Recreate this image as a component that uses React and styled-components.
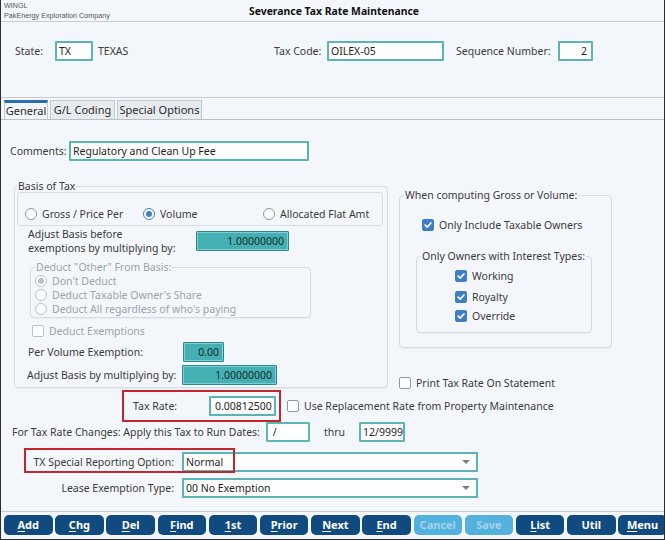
import React from 'react';
import styled, { createGlobalStyle, css } from 'styled-components';

const GlobalStyle = createGlobalStyle`
  html, body { margin: 0; padding: 0; background: #f3f7fb; }
  * { box-sizing: border-box; }
`;

const Frame = styled.div`
  width: 665px;
  height: 540px;
  background: #f3f7fb;
  border-left: 1px solid #2e2e2e;
  border-right: 1px solid #2e2e2e;
  border-bottom: 1px solid #2e2e2e;
  font-family: 'Noto Sans', sans-serif;
  font-size: 10.5px;
  color: #3a3a3a;
  display: flex;
  flex-direction: column;
  overflow: hidden;
`;

const Header = styled.div`
  height: 22px;
  border-bottom: 1px solid #c9cdd3;
  display: grid;
  grid-template-columns: 1fr auto 1fr;
  align-items: center;
`;

const Company = styled.div`
  font-family: 'Liberation Sans', sans-serif;
  font-size: 7.2px;
  line-height: 9.5px;
  color: #555;
  padding-left: 3px;
`;

const Title = styled.div`
  font-weight: 700;
  font-size: 10.4px;
  color: #111;
  padding-left: 3px;
`;

const TopRow = styled.div`
  height: 75px;
  display: flex;
  align-items: flex-start;
  padding: 19px 0 0 14px;
`;

const Label = styled.div`
  width: ${(p) => (p.$w ? `${p.$w}px` : 'auto')};
  margin-left: ${(p) => p.$ml || 0}px;
  text-align: ${(p) => (p.$right ? 'right' : 'left')};
  color: ${(p) => (p.$disabled ? '#9ca3aa' : '#3a3a3a')};
  line-height: ${(p) => p.$lh || 20}px;
  white-space: nowrap;
  flex-shrink: 0;
`;

const Input = styled.div`
  width: ${(p) => p.$w}px;
  height: 20px;
  margin-left: ${(p) => p.$ml || 0}px;
  flex-shrink: 0;
  border: 2px solid #5bb4b5;
  border-radius: 1px;
  background: #fff;
  color: #1e1e1e;
  padding: 0 ${(p) => (p.$right ? 4 : 2)}px;
  line-height: 16px;
  text-align: ${(p) => (p.$right ? 'right' : 'left')};
  white-space: nowrap;
  overflow: hidden;
  ${(p) =>
    p.$filled &&
    css`
      background: #44b0b4;
      border: 1px solid #2d8a8e;
      box-shadow: inset 0 0 0 1px #7fcdd0;
      line-height: 18px;
      color: #1b2b2c;
    `}
`;

const TabBar = styled.div`
  border-top: 1px solid #c9cdd3;
  border-bottom: 1px solid #b9bfc7;
  padding: 2px 0 0 3px;
  display: flex;
  gap: 2px;
  height: 23px;
`;

const Tab = styled.div`
  width: ${(p) => p.$w}px;
  height: 19px;
  text-align: center;
  line-height: 17px;
  font-size: 11px;
  color: #2a2a2a;
  border: 1px solid #c3c9d1;
  border-bottom: none;
  background: ${(p) => (p.$active ? '#f3f7fb' : '#e7ebf0')};
  ${(p) =>
    p.$active &&
    css`
      border-top: 3px solid #2a6db3;
      line-height: 15px;
    `}
`;

const Content = styled.div`
  flex: 1;
  display: flex;
  flex-direction: column;
`;

const Row = styled.div`
  display: flex;
  align-items: center;
  margin-top: ${(p) => p.$mt || 0}px;
  margin-left: ${(p) => p.$ml || 0}px;
  position: relative;
`;

const Middle = styled.div`
  display: flex;
  align-items: flex-start;
  margin: 18px 0 0 13px;
  gap: 11px;
`;

const Group = styled.fieldset`
  margin: ${(p) => p.$mt || 0}px 0 0 ${(p) => p.$ml || 0}px;
  width: ${(p) => p.$w}px;
  height: ${(p) => p.$h}px;
  padding: 0 ${(p) => p.$pr || 4}px ${(p) => p.$pb || 0}px ${(p) => p.$pl || 2}px;
  border: 1px solid #d6dce4;
  border-radius: 4px;
  min-width: 0;
  flex-shrink: 0;
  box-shadow: 0 1px 1px rgba(0, 0, 0, 0.04);
`;

const Legend = styled.legend`
  padding: 0 1px;
  line-height: 14px;
  white-space: nowrap;
  color: ${(p) => (p.$disabled ? '#9ca3aa' : '#3a3a3a')};
`;

const RadioBox = styled.div`
  margin-top: -1px;
  height: 34px;
  border: 1px solid #d6dce4;
  border-radius: 4px;
  display: flex;
  align-items: flex-end;
  padding: 0 0 4px 7px;
`;

const OptionItem = styled.div`
  display: flex;
  align-items: center;
  gap: 5px;
  width: ${(p) => (p.$w ? `${p.$w}px` : 'auto')};
  height: ${(p) => p.$h || 14}px;
  margin-top: ${(p) => p.$mt || 0}px;
  margin-left: ${(p) => p.$ml || 0}px;
  color: ${(p) => (p.$disabled ? '#9ca3aa' : '#3a3a3a')};
  white-space: nowrap;
  flex-shrink: 0;
`;

const RadioCircle = styled.span`
  width: 12px;
  height: 12px;
  border-radius: 50%;
  background: #fff;
  border: ${(p) => (p.$checked && !p.$disabled ? '1.5px' : '1px')} solid
    ${(p) => (p.$checked && !p.$disabled ? '#3f7fc8' : p.$disabled ? '#b9c0c7' : '#8e97a1')};
  display: flex;
  align-items: center;
  justify-content: center;
  flex-shrink: 0;
  &::after {
    content: '';
    display: ${(p) => (p.$checked ? 'block' : 'none')};
    width: 6px;
    height: 6px;
    border-radius: 50%;
    background: ${(p) => (p.$disabled ? '#b9c0c7' : '#3f7fc8')};
  }
`;

const CheckBox = styled.span`
  width: 12px;
  height: 12px;
  border-radius: 2px;
  flex-shrink: 0;
  display: flex;
  align-items: center;
  justify-content: center;
  background: ${(p) => (p.$checked ? '#3f7fc8' : '#fff')};
  border: 1px solid ${(p) => (p.$checked ? '#3f7fc8' : p.$disabled ? '#b9c0c7' : '#8e97a1')};
`;

const Column = styled.div`
  display: flex;
  flex-direction: column;
`;

const RedBox = styled.div`
  display: flex;
  align-items: center;
  border: 2px solid #c3262d;
  padding: 4px 3px 4px 9px;
`;

const RedOverlay = styled.div`
  position: absolute;
  left: 23px;
  top: -4px;
  width: 211px;
  height: 25px;
  border: 2px solid #c3262d;
  pointer-events: none;
`;

const Select = styled.div`
  width: 296px;
  height: 20px;
  margin-left: 8px;
  border: 2px solid #5bb4b5;
  background: #fff;
  color: #1e1e1e;
  line-height: 16px;
  padding: 0 2px;
  display: flex;
  justify-content: space-between;
  align-items: center;
`;

const Arrow = styled.span`
  width: 0;
  height: 0;
  border-left: 4px solid transparent;
  border-right: 4px solid transparent;
  border-top: 4px solid #7a7f85;
  margin-right: 4px;
`;

const Toolbar = styled.div`
  height: 28px;
  border-top: 1px solid #c3c8ce;
  padding: 3px 0 0 3px;
  display: flex;
  gap: 2.7px;
`;

const ToolButton = styled.div`
  width: 48.5px;
  height: 20px;
  flex-shrink: 0;
  border-radius: 5px;
  background: ${(p) => (p.$disabled ? '#54b1de' : '#114a7f')};
  color: ${(p) => (p.$disabled ? '#a3d3ec' : '#fff')};
  font-weight: 700;
  font-size: 11px;
  line-height: 20px;
  text-align: center;
  u {
    text-decoration-thickness: 1px;
    text-underline-offset: 2px;
  }
`;

const Radio = ({ checked, disabled, children, ...rest }) => (
  <OptionItem $disabled={disabled} {...rest}>
    <RadioCircle $checked={checked} $disabled={disabled} />
    {children}
  </OptionItem>
);

const Check = ({ checked, disabled, children, ...rest }) => (
  <OptionItem $disabled={disabled} {...rest}>
    <CheckBox $checked={checked} $disabled={disabled}>
      {checked && (
        <svg width="10" height="10" viewBox="0 0 10 10">
          <path
            d="M2.2 5.2 L4.2 7.1 L7.9 3"
            fill="none"
            stroke="#fff"
            strokeWidth="1.7"
            strokeLinecap="round"
            strokeLinejoin="round"
          />
        </svg>
      )}
    </CheckBox>
    {children}
  </OptionItem>
);

const buttons = [
  ['A', 'dd'],
  ['C', 'hg'],
  ['D', 'el'],
  ['F', 'ind'],
  ['1', 'st'],
  ['P', 'rior'],
  ['N', 'ext'],
  ['E', 'nd'],
  ['', 'Cancel', true],
  ['', 'Save', true],
  ['L', 'ist'],
  ['', 'Util'],
  ['M', 'enu'],
];

function App() {
  return (
    <>
      <GlobalStyle />
      <Frame>
        <Header>
          <Company>
            WINGL
            <br />
            PakEnergy Exploration Company
          </Company>
          <Title>Severance Tax Rate Maintenance</Title>
          <div />
        </Header>

        <TopRow>
          <Label $w={40}>State:</Label>
          <Input $w={38}>TX</Input>
          <Label $w={176} $ml={5}>TEXAS</Label>
          <Label $w={53}>Tax Code:</Label>
          <Input $w={117}>OILEX-05</Input>
          <Label $w={102} $ml={12}>Sequence Number:</Label>
          <Input $w={35} $right>2</Input>
        </TopRow>

        <TabBar>
          <Tab $w={44} $active>General</Tab>
          <Tab $w={65}>G/L Coding</Tab>
          <Tab $w={85}>Special Options</Tab>
        </TabBar>

        <Content>
          <Row $mt={21} $ml={9}>
            <Label $w={59}>Comments:</Label>
            <Input $w={240}>Regulatory and Clean Up Fee</Input>
          </Row>

          <Middle>
            <Group $w={374} $h={209} $pb={2}>
              <Legend>Basis of Tax</Legend>
              <RadioBox>
                <Radio $w={118}>Gross / Price Per</Radio>
                <Radio $w={120} checked>Volume</Radio>
                <Radio>Allocated Flat Amt</Radio>
              </RadioBox>
              <Row $mt={1} $ml={11}>
                <Label $w={168} $lh={14}>
                  Adjust Basis before
                  <br />
                  exemptions by multiplying by:
                </Label>
                <Input $w={93} $filled $right>1.00000000</Input>
              </Row>
              <Group $w={281} $h={58} $ml={13} $mt={5} $pl={4} $pb={1}>
                <Legend $disabled>Deduct "Other" From Basis:</Legend>
                <Radio checked disabled>Don't Deduct</Radio>
                <Radio disabled>Deduct Taxable Owner's Share</Radio>
                <Radio disabled>Deduct All regardless of who's paying</Radio>
              </Group>
              <Check disabled $ml={15} $mt={6}>Deduct Exemptions</Check>
              <Row $mt={4} $ml={11}>
                <Label $w={155}>Per Volume Exemption:</Label>
                <Input $w={41} $filled $right>0.00</Input>
              </Row>
              <Row $mt={3} $ml={10}>
                <Label $w={155}>Adjust Basis by multiplying by:</Label>
                <Input $w={95} $filled $right>1.00000000</Input>
              </Row>
            </Group>

            <Column>
              <Group $w={213} $h={160} $mt={9} $pl={4}>
                <Legend>When computing Gross or Volume:</Legend>
                <Check checked $ml={18} $mt={16}>Only Include Taxable Owners</Check>
                <Group $w={176} $h={84} $ml={12} $mt={17} $pl={4}>
                  <Legend>Only Owners with Interest Types:</Legend>
                  <Check checked $ml={34} $mt={6}>Working</Check>
                  <Check checked $ml={34} $mt={7}>Royalty</Check>
                  <Check checked $ml={34} $mt={5}>Override</Check>
                </Group>
              </Group>
              <Check $mt={28}>Print Tax Rate On Statement</Check>
            </Column>
          </Middle>

          <Row $ml={121}>
            <RedBox>
              <Label $w={76}>Tax Rate:</Label>
              <Input $w={67} $right>0.00812500</Input>
            </RedBox>
            <Check $ml={6}>Use Replacement Rate from Property Maintenance</Check>
          </Row>

          <Row $ml={11}>
            <Label $w={254}>For Tax Rate Changes: Apply this Tax to Run Dates:</Label>
            <Input $w={44}>&nbsp;/</Input>
            <Label $w={35} $ml={14}>thru</Label>
            <Input $w={46}>12/9999</Input>
          </Row>

          <Row $mt={10}>
            <Label $w={173} $right>TX Special Reporting Option:</Label>
            <Select>
              Normal
              <Arrow />
            </Select>
            <RedOverlay />
          </Row>

          <Row $mt={6}>
            <Label $w={173} $right>Lease Exemption Type:</Label>
            <Select>
              00 No Exemption
              <Arrow />
            </Select>
          </Row>
        </Content>

        <Toolbar>
          {buttons.map(([u, rest, disabled]) => (
            <ToolButton key={u + rest} $disabled={disabled}>
              {u && <u>{u}</u>}
              {rest}
            </ToolButton>
          ))}
        </Toolbar>
      </Frame>
    </>
  );
}

export default App;
